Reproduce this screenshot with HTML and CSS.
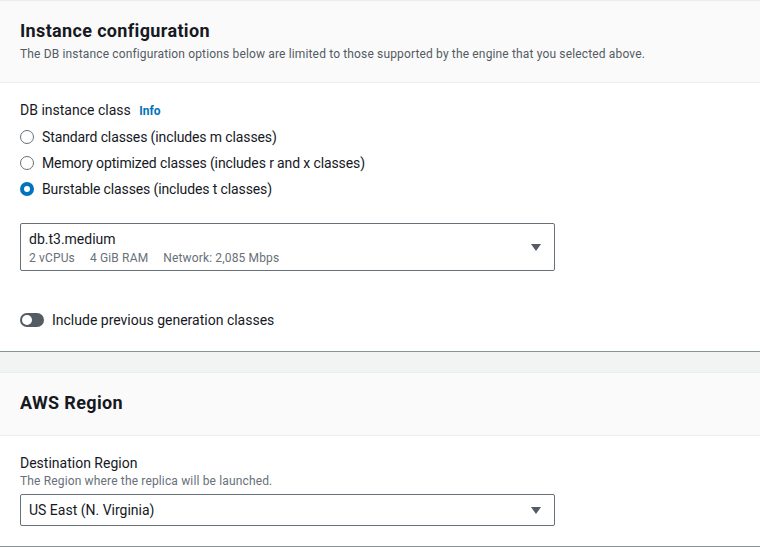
FILE: index.html
```html
<!DOCTYPE html>
<html lang="en">
<head>
<meta charset="utf-8">
<title>Instance configuration</title>
<link rel="stylesheet" href="styles.css">
</head>
<body>
<div class="page">
  <section class="card">
    <header class="card-header">
      <h2 class="card-title">Instance configuration</h2>
      <p class="card-desc">The DB instance configuration options below are limited to those supported by the engine that you selected above.</p>
    </header>
    <div class="card-body">
      <div class="field-label">DB instance class <a class="info">Info</a></div>
      <div class="radio-group">
        <label class="radio"><span class="radio-dot"></span><span>Standard classes (includes m classes)</span></label>
        <label class="radio"><span class="radio-dot"></span><span>Memory optimized classes (includes r and x classes)</span></label>
        <label class="radio"><span class="radio-dot checked"></span><span>Burstable classes (includes t classes)</span></label>
      </div>
      <div class="select select-tall">
        <div class="select-text">
          <div class="select-value">db.t3.medium</div>
          <div class="select-tags"><span>2 vCPUs</span><span>4 GiB RAM</span><span>Network: 2,085 Mbps</span></div>
        </div>
        <span class="caret"></span>
      </div>
      <label class="toggle-row"><span class="toggle"><span class="knob"></span></span><span>Include previous generation classes</span></label>
    </div>
  </section>
  <div class="gap"></div>
  <section class="card card-last">
    <header class="card-header card-header-single">
      <h2 class="card-title">AWS Region</h2>
    </header>
    <div class="card-body card-body-region">
      <div class="field-label">Destination Region</div>
      <div class="field-desc">The Region where the replica will be launched.</div>
      <div class="select select-short">
        <div class="select-value">US East (N. Virginia)</div>
        <span class="caret"></span>
      </div>
    </div>
  </section>
</div>
</body>
</html>
```
FILE: styles.css
```css
* { box-sizing: border-box; }
html, body { margin: 0; padding: 0; background: #ffffff; }
body {
  font-family: "Roboto", "Liberation Sans", sans-serif;
  color: #16191f;
  font-size: 14px;
  line-height: 22px;
}
.page { width: 760px; height: 547px; overflow: hidden; }
.card {
  background: #fff;
  border-top: 1px solid #eaeded;
  border-bottom: 1px solid #879596;
}
.card-header {
  background: #fafafa;
  border-bottom: 1px solid #eaeded;
  padding: 19px 20px 20px;
}
.card-header-single { padding: 19px 20px 21px; }
.card-title {
  margin: 0 0 4px;
  font-size: 18px;
  line-height: 22px;
  font-weight: 700;
  letter-spacing: 0.35px;
}
.card-header-single .card-title { margin: 0; }
.card-desc {
  margin: 0;
  font-size: 12px;
  line-height: 16px;
  color: #545b64;
  letter-spacing: 0.15px;
}
.card-body { padding: 16px 20px 20px; }
.field-label { font-size: 14px; line-height: 22px; }
.info {
  font-size: 12px;
  font-weight: 700;
  color: #0073bb;
  margin-left: 5px;
}
.radio-group {
  display: flex;
  flex-direction: column;
  gap: 4px;
  margin-top: 4px;
}
.radio {
  display: flex;
  align-items: center;
  gap: 8px;
  height: 22px;
  letter-spacing: -0.12px;
}
.radio-dot {
  width: 14px;
  height: 14px;
  border-radius: 50%;
  border: 1.5px solid #687078;
  flex: none;
  background: #fff;
}
.radio-dot.checked {
  border: 4.5px solid #0073bb;
  background: #fff;
}
.select {
  width: 535px;
  border: 1px solid #687078;
  border-radius: 2px;
  display: flex;
  align-items: center;
  justify-content: space-between;
  padding: 4px 13px 4px 8px;
}
.select-tall { margin-top: 23px; height: 48px; }
.select-short { margin-top: 5px; height: 32px; padding-top: 0; padding-bottom: 0; }
.select-value { font-size: 14px; line-height: 22px; }
.select-tags {
  font-size: 12px;
  line-height: 16px;
  color: #687078;
  display: flex;
  gap: 15px;
  letter-spacing: 0.15px;
}
.caret {
  width: 0;
  height: 0;
  border-left: 5px solid transparent;
  border-right: 5px solid transparent;
  border-top: 7px solid #545b64;
}
.toggle-row {
  display: flex;
  align-items: center;
  gap: 8px;
  margin-top: 38px;
  height: 22px;
}
.toggle {
  width: 24px;
  height: 14px;
  border-radius: 7px;
  background: #545b64;
  display: flex;
  align-items: center;
  padding: 0 2px;
}
.knob {
  width: 10px;
  height: 10px;
  border-radius: 50%;
  background: #fff;
}
.gap { height: 20px; background: #f2f3f3; }
.card-body-region { padding: 16px 20px 20px; }
.field-desc {
  font-size: 12px;
  line-height: 16px;
  color: #687078;
  margin-top: -1px;
  letter-spacing: 0.15px;
}
```
